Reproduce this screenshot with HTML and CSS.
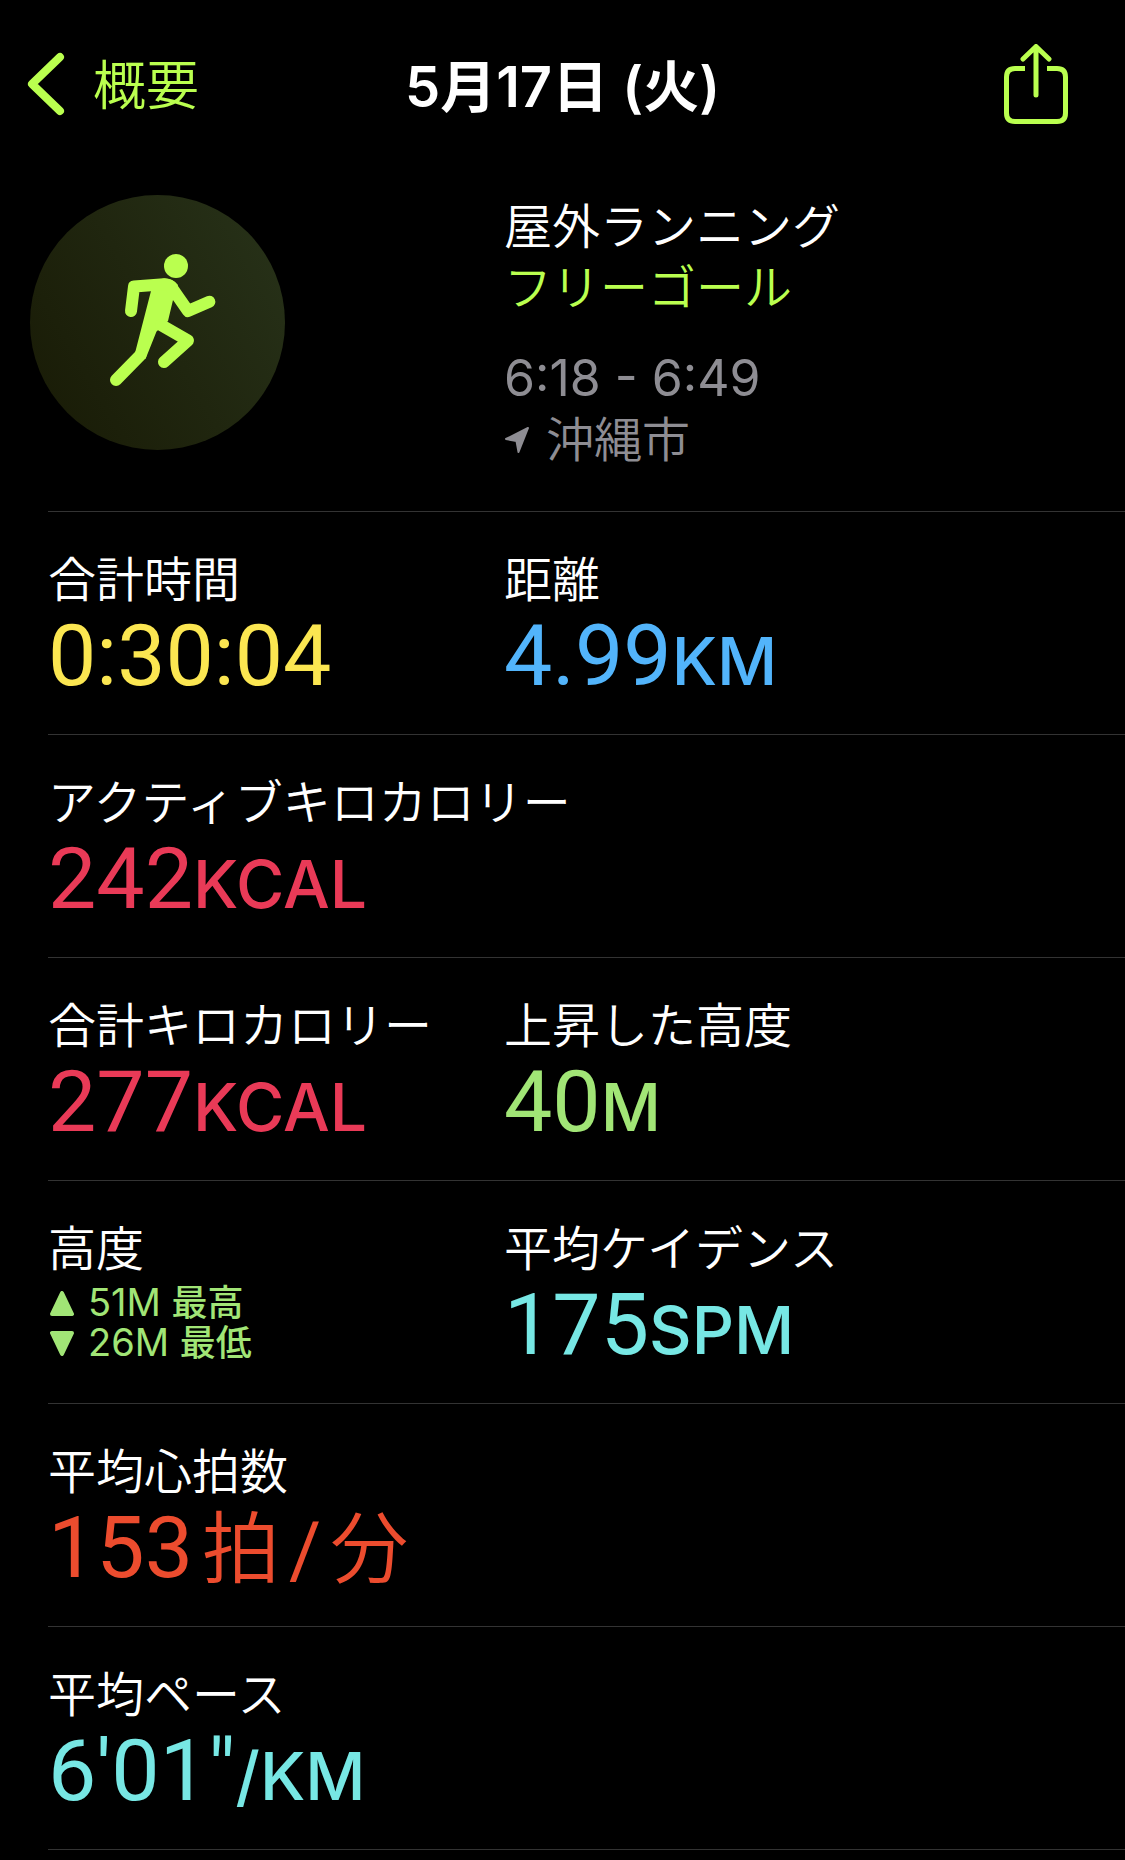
FILE: index.html
```html
<!DOCTYPE html>
<html lang="ja">

<head>
    <meta charset="UTF-8">
    <meta name="viewport" content="width=device-width, initial-scale=1.0">
    <title>屋外ランニング</title>
    <link rel="stylesheet" href="styles.css">
</head>

<body>
    <header class="navbar">
        <a class="back" href="#">
            <svg class="chevron" viewBox="0 0 38 64" aria-hidden="true">
                <path d="M33 5 L5 32 L33 59" />
            </svg>
            <span>概要</span>
        </a>
        <h1>5月17日 (火)</h1>
        <button class="share" type="button" aria-label="共有">
            <svg viewBox="0 0 64 80" aria-hidden="true">
                <path class="tray" d="M21 24.500 H11 Q2.500 24.500 2.500 33 V69 Q2.500 77.500 11 77.500 H53 Q61.500 77.500 61.500 69 V33 Q61.500 24.500 53 24.500 H43" />
                <path d="M32 51 V3 M19 15 L32 2.500 L45 15" />
            </svg>
        </button>
    </header>

    <main>
        <section class="summary">
            <div class="badge">
                <svg viewBox="0 0 255 255" aria-hidden="true">
                    <circle cx="146" cy="71" r="12" />
                    <path class="body" d="M121 86 L134 83.500 Q143 83 148 90 L143 105 L138 126 L126.500 136.500 L115.500 164 L105 158 L121 96 Z" />
                    <path class="limb" d="M101 116 L104 91.500 L134 89.200 Q139 89 142 93 L158 116 L179.300 106.700" />
                    <path class="limb" d="M110.500 160 L86 185" />
                    <path class="limb" d="M131 130 L158 145.500 L134 167" />
                </svg>
            </div>
            <div class="info">
                <h2>屋外ランニング</h2>
                <p class="goal">フリーゴール</p>
                <p class="time">6:18 - 6:49</p>
                <p class="place">
                    <svg viewBox="0 0 26 28" aria-hidden="true">
                        <path d="M2 13 L24 2 L14.500 26 L12.500 15 Z" />
                    </svg>
                    沖縄市
                </p>
            </div>
        </section>

        <dl class="stats">
            <div class="row">
                <div>
                    <dt>合計時間</dt>
                    <dd class="yellow">0:30:04</dd>
                </div>
                <div>
                    <dt>距離</dt>
                    <dd class="blue">4.99<span class="unit">KM</span></dd>
                </div>
            </div>
            <div class="row">
                <div>
                    <dt>アクティブキロカロリー</dt>
                    <dd class="red">242<span class="unit">KCAL</span></dd>
                </div>
            </div>
            <div class="row">
                <div>
                    <dt>合計キロカロリー</dt>
                    <dd class="red">277<span class="unit">KCAL</span></dd>
                </div>
                <div>
                    <dt>上昇した高度</dt>
                    <dd class="green">40<span class="unit">M</span></dd>
                </div>
            </div>
            <div class="row">
                <div>
                    <dt>高度</dt>
                    <dd class="green range">
                        <p>
                            <svg viewBox="0 0 24 25" aria-hidden="true"><path d="M12 2 L22 23 H2 Z" /></svg>
                            <span>51M <b>最高</b></span>
                        </p>
                        <p>
                            <svg viewBox="0 0 24 25" aria-hidden="true"><path d="M2 2 H22 L12 23 Z" /></svg>
                            <span>26M <b>最低</b></span>
                        </p>
                    </dd>
                </div>
                <div>
                    <dt>平均ケイデンス</dt>
                    <dd class="cyan">175<span class="unit">SPM</span></dd>
                </div>
            </div>
            <div class="row">
                <div>
                    <dt>平均心拍数</dt>
                    <dd class="orange heart-rate">153 <span class="unit-ja">拍</span> <span class="slash">/</span> <span class="unit-ja">分</span></dd>
                </div>
            </div>
            <div class="row">
                <div>
                    <dt>平均ペース</dt>
                    <dd class="cyan">6'01"<span class="unit">/KM</span></dd>
                </div>
            </div>
        </dl>
    </main>
</body>

</html>
```
FILE: styles.css
```css
* {
    margin: 0;
    padding: 0;
    box-sizing: border-box;
}

body {
    background-color: #000;
    color: #fff;
    font-family: Inter, "Noto Sans CJK JP", sans-serif;
    font-size: 48px;
    font-weight: 350;
}

svg {
    display: block;
    flex: none;
}

/* top bar */
.navbar {
    display: grid;
    grid-template-columns: 1fr auto 1fr;
    align-items: center;
    height: 168px;
    margin-bottom: 4px;
    padding: 0 27px;
}

.navbar h1,
.back span {
    padding-bottom: 4px;
}

.back {
    display: flex;
    align-items: center;
    gap: 28px;
    color: #baff4f;
    font-size: 53px;
    text-decoration: none;
}

.chevron {
    width: 38px;
    height: 64px;
    fill: none;
    stroke: #baff4f;
    stroke-width: 8;
    stroke-linecap: round;
    stroke-linejoin: round;
}

h1 {
    font-size: 56px;
    font-weight: 600;
}

.share {
    justify-self: end;
    margin-right: 30px;
    border: none;
    background: none;
    cursor: pointer;
}

.share svg {
    width: 64px;
    height: 80px;
    fill: none;
    stroke: #baff4f;
    stroke-width: 5;
    stroke-linecap: round;
    stroke-linejoin: round;
}

.share .tray {
    stroke-linecap: butt;
}

/* workout summary */
.summary {
    display: grid;
    grid-template-columns: calc(44.8vw - 30px) 1fr;
    padding: 23px 0 41px 30px;
}

.badge {
    width: 255px;
    height: 255px;
    border-radius: 50%;
    background: linear-gradient(60deg, #181a05, #20260f 50%, #28331a);
}

.badge circle,
.badge .body {
    fill: #baff4f;
}

.badge .limb {
    fill: none;
    stroke: #baff4f;
    stroke-width: 12;
    stroke-linecap: round;
    stroke-linejoin: round;
}

.info {
    padding-top: 1px;
    line-height: 61px;
}

h2 {
    font-size: 48px;
    font-weight: 350;
}

.goal {
    margin-bottom: 30px;
    color: #baff4f;
}

.time,
.place {
    color: #8e8d93;
}

.time {
    font-size: 50px;
    font-weight: 400;
}

.place {
    display: flex;
    align-items: center;
    gap: 16px;
}

.place svg {
    width: 26px;
    height: 28px;
    fill: #8e8d93;
    stroke: #8e8d93;
    stroke-width: 2;
    stroke-linejoin: round;
}

/* numbers */
.row {
    display: grid;
    grid-template-columns: calc(44.8vw - 48px) 1fr;
    margin-left: 48px;
    padding: 40px 0 30px;
    border-top: 1px solid #333;
}

.row:last-child {
    border-bottom: 1px solid #333;
}

dt {
    line-height: 56px;
    white-space: nowrap;
}

dd {
    height: 96px;
    font-family: Roboto, "Noto Sans CJK JP", sans-serif;
    font-size: 86px;
    font-weight: 400;
    line-height: 96px;
    white-space: nowrap;
}

.unit {
    font-family: Inter, sans-serif;
    font-size: 66px;
    font-weight: 450;
}

.heart-rate {
    display: flex;
    align-items: baseline;
    gap: 9px;
}

.unit-ja {
    font-size: 78px;
    font-weight: 350;
}

.slash {
    font-size: 78px;
}

.range {
    padding-top: 6px;
    font-family: Inter, "Noto Sans CJK JP", sans-serif;
    font-size: 38px;
    line-height: 39px;
}

.range p {
    display: flex;
    align-items: center;
    gap: 14px;
    padding-left: 2px;
}

.range b {
    font-size: 36px;
    font-weight: 500;
}

.range svg {
    width: 24px;
    height: 25px;
    fill: #a1e576;
    stroke: #a1e576;
    stroke-width: 4;
    stroke-linejoin: round;
}

.yellow {
    color: #fbe651;
}

.blue {
    color: #52b4fb;
}

.red {
    color: #e93a57;
}

.green {
    color: #a1e576;
}

.cyan {
    color: #77e7e4;
}

.orange {
    color: #ec4c2e;
}
```
